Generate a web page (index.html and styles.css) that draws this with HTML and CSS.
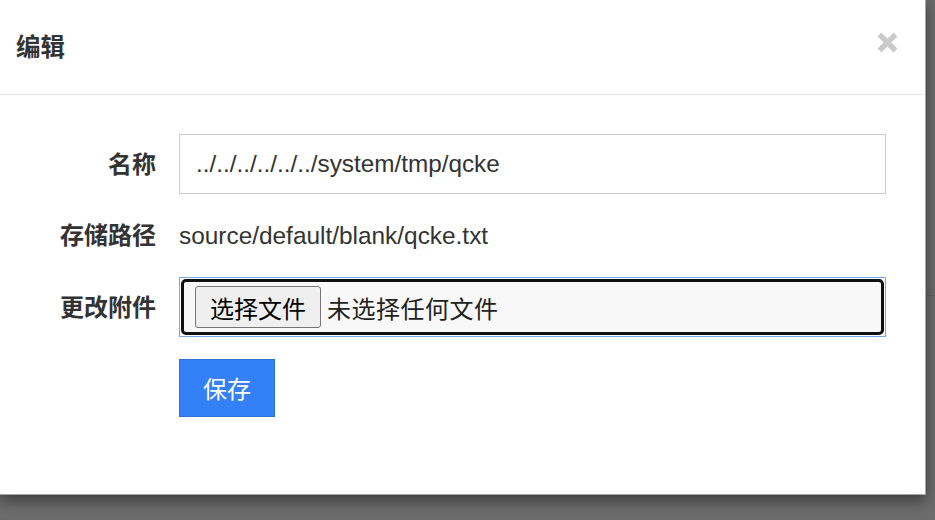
FILE: index.html
```html
<!DOCTYPE html>
<html lang="zh-CN">
<head>
<meta charset="utf-8">
<title>编辑</title>
<link rel="stylesheet" href="styles.css">
</head>
<body>
<div class="page">
  <div class="page-top"></div>
</div>
<div class="modal">
  <div class="modal-header">
    <h4 class="modal-title">编辑</h4>
    <button class="close" type="button" aria-label="关闭">
      <svg width="21" height="21" viewBox="0 0 21 21"><path d="M2.5 2.5L18.5 18.5M18.5 2.5L2.5 18.5" stroke="#cacaca" stroke-width="5.4" fill="none"/></svg>
    </button>
  </div>
  <div class="modal-body">
    <form class="form">
      <label class="label">名称</label>
      <input class="text-input" type="text" value="../../../../../../system/tmp/qcke">
      <label class="label">存储路径</label>
      <div class="static">source/default/blank/qcke.txt</div>
      <label class="label">更改附件</label>
      <div class="file-field">
        <div class="file-ring">
          <span class="file-btn">选择文件</span>
          <span class="file-text">未选择任何文件</span>
        </div>
      </div>
      <div></div>
      <div class="actions"><button class="btn-save" type="button">保存</button></div>
    </form>
  </div>
</div>
</body>
</html>
```

FILE: styles.css
```css
html, body {
  margin: 0;
  padding: 0;
}
body {
  width: 935px;
  height: 520px;
  overflow: hidden;
  background: #6d6d6d;
  font-family: "Liberation Sans", "Noto Sans CJK SC", sans-serif;
  color: #333;
}
.page-top {
  height: 295px;
  border-bottom: 1px solid #626262;
}
.modal {
  position: absolute;
  left: -1px;
  top: -1px;
  width: 927px;
  height: 496px;
  box-sizing: border-box;
  background: #fff;
  border: 1px solid rgba(0, 0, 0, 0.35);
  box-shadow: 0 5px 15px rgba(0, 0, 0, 0.5);
}
.modal-header {
  height: 94px;
  border-bottom: 1px solid #e5e5e5;
  display: flex;
  justify-content: space-between;
  align-items: center;
}
.modal-title {
  margin: 0;
  padding: 0 0 4px 16px;
  font-size: 24.5px;
  font-weight: 700;
  color: #333;
  font-family: "Noto Sans CJK SC", sans-serif;
}
.close {
  align-self: flex-start;
  margin: 32px 27px 0 0;
  padding: 0;
  border: 0;
  background: none;
  width: 21px;
  height: 21px;
  display: block;
}
.close svg {
  display: block;
}
.modal-body {
  padding-top: 39px;
}
.form {
  display: grid;
  grid-template-columns: 156px 707px;
  grid-template-rows: 60px 43px 60px 58px;
  column-gap: 23px;
  row-gap: 20px;
  margin: 0;
}
.label {
  align-self: center;
  text-align: right;
  padding-bottom: 4px;
  font-size: 24px;
  font-weight: 700;
  color: #333;
  font-family: "Noto Sans CJK SC", sans-serif;
}
.text-input {
  height: 60px;
  width: 100%;
  box-sizing: border-box;
  border: 1px solid #cccccc;
  border-radius: 0;
  padding: 0 16px;
  margin: 0;
  font-family: "Liberation Sans", "Noto Sans CJK SC", sans-serif;
  font-size: 24.3px;
  color: #333;
  background: #fff;
  outline: none;
}
.static {
  align-self: center;
  font-size: 24.4px;
  color: #333;
}
.file-field {
  height: 60px;
  box-sizing: border-box;
  border: 1px solid #78a8ec;
  padding: 1px;
  background: #fff;
}
.file-ring {
  height: 100%;
  box-sizing: border-box;
  border: 3px solid #111;
  border-radius: 5px;
  background: #f8f8f8;
  display: flex;
  align-items: center;
  padding-left: 11px;
}
.file-btn {
  width: 126px;
  height: 42px;
  box-sizing: border-box;
  border: 1px solid #767676;
  border-radius: 3px;
  background: #efefef;
  color: #000;
  font-size: 24px;
  display: flex;
  align-items: center;
  justify-content: center;
  font-family: "Noto Sans CJK SC", sans-serif;
}
.file-text {
  margin-left: 6px;
  font-size: 24px;
  letter-spacing: 0.5px;
  color: #222;
  font-family: "Noto Sans CJK SC", sans-serif;
}
.actions {
  margin-top: 2px;
}
.btn-save {
  width: 96px;
  height: 58px;
  box-sizing: border-box;
  border: 1px solid #2d72dc;
  border-radius: 0;
  background: #3380f7;
  color: #fff;
  font-size: 24px;
  padding: 0 0 2px;
  font-family: "Noto Sans CJK SC", sans-serif;
}
```
